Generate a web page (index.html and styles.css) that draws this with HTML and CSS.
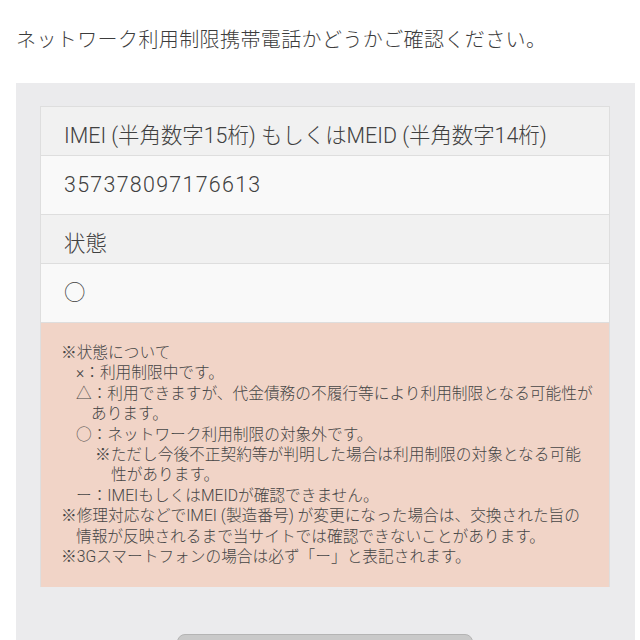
FILE: index.html
```html
<!DOCTYPE html>
<html lang="ja">
<head>
  <meta charset="UTF-8">
  <title>ネットワーク利用制限確認結果</title>
  <link rel="stylesheet" href="styles.css">
</head>
<body>
  <p class="lead">ネットワーク利用制限携帯電話かどうかご確認ください。</p>

  <div class="panel">
    <div class="result">
      <div class="row row-head">IMEI (半角数字15桁) もしくはMEID (半角数字14桁)</div>
      <div class="row row-value number">357378097176613</div>
      <div class="row row-head">状態</div>
      <div class="row row-value">○</div>

      <div class="notes">
        <p class="note-top">※状態について</p>
        <p class="note-item">×：利用制限中です。</p>
        <p class="note-item">△：利用できますが、代金債務の不履行等により利用制限となる可能性が<br>あります。</p>
        <p class="note-item">○：ネットワーク利用制限の対象外です。</p>
        <p class="note-sub">※ただし今後不正契約等が判明した場合は利用制限の対象となる可能<br>性があります。</p>
        <p class="note-item">ー：IMEIもしくはMEIDが確認できません。</p>
        <p class="note-top">※修理対応などでIMEI (製造番号) が変更になった場合は、交換された旨の<br>情報が反映されるまで当サイトでは確認できないことがあります。</p>
        <p class="note-top">※3Gスマートフォンの場合は必ず「ー」と表記されます。</p>
      </div>
    </div>

    <div class="actions">
      <button class="back-btn" type="button" aria-label="戻る"></button>
    </div>
  </div>
</body>
</html>
```

FILE: styles.css
```css
body {
  margin: 0;
  font-family: Roboto, "Noto Sans CJK JP", sans-serif;
  font-weight: 300;
  color: #3c3c3c;
  background-color: #fff;
}
.lead {
  margin: 0;
  padding: 25px 16px 0;
  font-size: 20px;
  line-height: 30px;
  letter-spacing: 0.4px;
}
.panel {
  margin: 28px 5px 0 16px;
  padding: 23px 25px 30px 24px;
  background-color: #ebebed;
}
.result {
  border: 1px solid #dedede;
  border-bottom: none;
}
.row {
  padding: 0 23px;
  font-size: 21.4px;
  line-height: 30px;
  color: #404040;
  border-bottom: 1px solid #dedede;
}
.row-head {
  height: 34px;
  padding-top: 14px;
  background-color: #f1f1f1;
}
.row-value {
  height: 44px;
  padding-top: 14px;
  background-color: #f9f9f9;
}
.number {
  letter-spacing: 1.3px;
}
.notes {
  padding: 20px 10px 20px 20px;
  background-color: #f1d4c7;
  font-size: 15.7px;
  line-height: 20.4px;
  color: #464646;
}
.notes p {
  margin: 0;
  white-space: nowrap;
}
.note-top {
  padding-left: 15px;
  text-indent: -15px;
}
.note-item {
  padding-left: 30px;
  text-indent: -15px;
}
.note-sub {
  padding-left: 50px;
  text-indent: -16px;
}
.actions {
  display: flex;
  justify-content: center;
  margin-top: 47px;
}
.back-btn {
  width: 296px;
  height: 50px;
  border: 1px solid #b4b4b4;
  border-radius: 8px;
  background-color: #c9c9c9;
}
```
